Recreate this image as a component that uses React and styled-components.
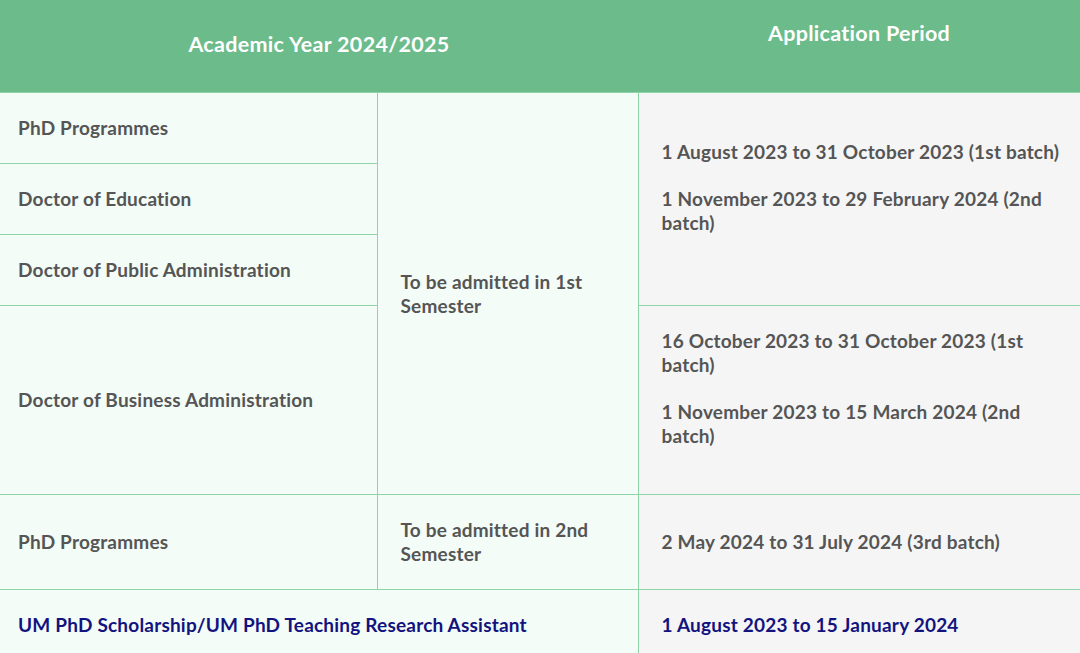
import React from "react";
import styled, { createGlobalStyle } from "styled-components";

const GlobalStyle = createGlobalStyle`
  html, body {
    margin: 0;
    padding: 0;
    overflow: hidden;
    background: #ffffff;
  }
  body {
    font-family: Lato, "Liberation Sans", sans-serif;
  }
`;

const Table = styled.table`
  width: 1080px;
  border-collapse: collapse;
  table-layout: fixed;
  font-size: 19px;
  letter-spacing: 0.2px;
  line-height: 24px;
  font-weight: 700;
`;

const HeadCell = styled.th`
  background: #6cbb8a;
  color: #ffffff;
  font-size: 21.5px;
  letter-spacing: 0.3px;
  font-weight: 700;
  height: 92px;
  padding: 0 20px;
  text-align: center;
  vertical-align: middle;
`;

const HeadText = styled.p`
  margin: ${p => (p.raised ? "0 0 27px" : "0 0 4px")};
`;

const Cell = styled.td`
  background: ${p => (p.grey ? "#f5f5f5" : "#f3fcf7")};
  color: ${p => (p.navy ? "#13137f" : "#555555")};
  border: 1px solid #8fd4a7;
  padding: 23px ${p => (p.grey ? "14px" : "20px")} 23px ${p => (p.first ? "18px" : "23px")};
  vertical-align: middle;
  text-align: left;

  &:first-child {
    border-left: none;
  }
  &:last-child {
    border-right: none;
  }
`;

const Para = styled.p`
  margin: 0 0 23px;
`;

const periods = {
  doctoral: [
    "1 August 2023 to 31 October 2023 (1st batch)",
    "1 November 2023 to 29 February 2024 (2nd batch)",
  ],
  business: [
    "16 October 2023 to 31 October 2023 (1st batch)",
    "1 November 2023 to 15 March 2024 (2nd batch)",
  ],
};

export default function App() {
  return (
    <>
      <GlobalStyle />
      <Table>
        <colgroup>
          <col style={{ width: 377 }} />
          <col style={{ width: 261 }} />
          <col style={{ width: 442 }} />
        </colgroup>
        <thead>
          <tr>
            <HeadCell colSpan={2}>
              <HeadText>Academic Year 2024/2025</HeadText>
            </HeadCell>
            <HeadCell>
              <HeadText raised>Application Period</HeadText>
            </HeadCell>
          </tr>
        </thead>
        <tbody>
          <tr>
            <Cell first>PhD Programmes</Cell>
            <Cell rowSpan={4}>To be admitted in 1st Semester</Cell>
            <Cell grey rowSpan={3}>
              {periods.doctoral.map(t => (
                <Para key={t}>{t}</Para>
              ))}
            </Cell>
          </tr>
          <tr>
            <Cell first>Doctor of Education</Cell>
          </tr>
          <tr>
            <Cell first>Doctor of Public Administration</Cell>
          </tr>
          <tr>
            <Cell first>Doctor of Business Administration</Cell>
            <Cell grey>
              {periods.business.map(t => (
                <Para key={t}>{t}</Para>
              ))}
            </Cell>
          </tr>
          <tr>
            <Cell first>PhD Programmes</Cell>
            <Cell>To be admitted in 2nd Semester</Cell>
            <Cell grey>2 May 2024 to 31 July 2024 (3rd batch)</Cell>
          </tr>
          <tr>
            <Cell first navy colSpan={2}>
              UM PhD Scholarship/UM PhD Teaching Research Assistant
            </Cell>
            <Cell grey navy>
              1 August 2023 to 15 January 2024
            </Cell>
          </tr>
        </tbody>
      </Table>
    </>
  );
}
